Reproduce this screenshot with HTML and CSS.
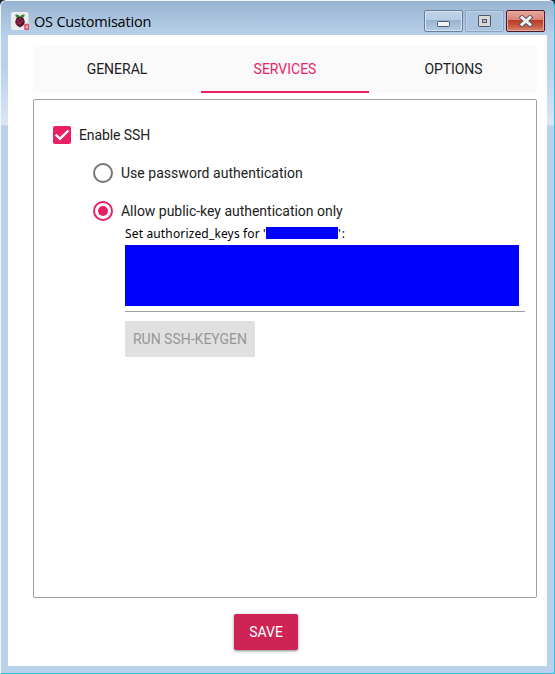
FILE: index.html
```html
<!DOCTYPE html>
<html lang="en">
<head>
<meta charset="utf-8">
<title>OS Customisation</title>
<link rel="stylesheet" href="styles.css">
</head>
<body>
<div class="window">
  <header class="titlebar">
    <svg class="app-icon" width="18" height="18" viewBox="0 0 18 18">
      <rect width="17.5" height="18" rx="2" fill="#eeecec"/>
      <path d="M4.2 2.8Q7.5 2 9 4.4Q10.5 2 13.8 2.8Q13.4 6.4 9 6.4Q4.6 6.4 4.2 2.8Z" fill="#398447"/>
      <path d="M9 5C12 5 13.2 7 13.7 9.5C14 12 12 14.2 9 15.4C6 14.2 4 12 4.3 9.5C4.8 7 6 5 9 5Z" fill="#48152a"/>
      <g fill="#a9234d"><circle cx="9" cy="7" r="1.2"/><circle cx="6.9" cy="9" r="1.3"/><circle cx="11.1" cy="9" r="1.3"/><circle cx="9" cy="11.2" r="1.4"/><circle cx="6.3" cy="11.8" r="1"/><circle cx="9" cy="14" r=".8"/></g>
      <rect x="13.2" y="11.8" width="4.8" height="6.2" rx=".7" fill="#d75069"/>
      <path d="M16.2 16.7V13.2L14.6 15.5H17" fill="none" stroke="#f4cbd2" stroke-width=".7"/>
    </svg>
    <h1 class="title">OS Customisation</h1>
    <div class="controls">
      <button class="control" aria-label="Minimise"><svg width="13" height="6"><rect x=".5" y=".5" width="12" height="5" rx=".7" fill="#f3f3f3" stroke="#535666"/></svg></button>
      <button class="control control-max" aria-label="Maximise"><svg width="13" height="12"><rect x=".5" y=".5" width="12" height="11" rx=".7" fill="#d8d8d8" stroke="#535666"/><rect x="4.5" y="4.5" width="4" height="3" fill="#a5c1df" stroke="#535666"/></svg></button>
      <button class="control control-close" aria-label="Close"><svg width="14" height="12" viewBox="0 0 14 12"><path d="M3 2.5L11 9.5M11 2.5L3 9.5" stroke="#535666" stroke-width="4.8" stroke-linecap="square"/><path d="M3 2.5L11 9.5M11 2.5L3 9.5" stroke="#f4f4f4" stroke-width="2.9" stroke-linecap="square"/></svg></button>
    </div>
  </header>
  <main class="content">
    <nav class="tabs">
      <div class="tab"><span>GENERAL</span></div>
      <div class="tab active"><span>SERVICES</span></div>
      <div class="tab tab-options"><span>OPTIONS</span></div>
    </nav>
    <section class="panel">
      <div class="option">
        <svg width="18" height="18"><rect width="18" height="18" rx="2" fill="#e91e63"/><path d="M2.7 8.6L7 12.9L15.4 4.5" fill="none" stroke="#fff" stroke-width="2.4"/></svg>
        <span class="label-ssh">Enable SSH</span>
      </div>
      <div class="option nested">
        <svg width="20" height="20"><circle cx="10" cy="10" r="9" fill="none" stroke="#757575" stroke-width="2"/></svg>
        <span class="label-password">Use password authentication</span>
      </div>
      <div class="option nested">
        <svg width="20" height="20"><circle cx="10" cy="10" r="9" fill="none" stroke="#e91e63" stroke-width="2"/><circle cx="10" cy="10" r="5" fill="#e91e63"/></svg>
        <span class="label-key">Allow public-key authentication only</span>
      </div>
      <div class="keys">
        <div class="keys-label"><span>Set authorized_keys for '</span><span class="user-mask"></span><span class="label-end">':</span></div>
        <div class="key-field"><div class="key-mask"></div></div>
        <button class="keygen" disabled><span>RUN SSH-KEYGEN</span></button>
      </div>
    </section>
    <button class="save"><span>SAVE</span></button>
  </main>
</div>
</body>
</html>
```

FILE: styles.css
```css
* { box-sizing: border-box; }
body { margin: 0; background: #172b38; }
button { font: inherit; padding: 0; border: 0; }
svg { display: block; flex: none; }

.window {
  width: 555px;
  height: 674px;
  padding: 0 7px 7px;
  border: 1px solid #2cc3dc;
  border-top-color: #eef5fb;
  border-left-color: #f0f6fb;
  border-radius: 6px 6px 0 0;
  background:
    linear-gradient(#99b4d1 0, #b9d1ea 35px, #b9d1ea 64px, #d9e6f4 124px, #b9d1ea 125px);
}
.titlebar {
  height: 34px;
  display: flex;
  align-items: flex-start;
  padding: 11px 2px 0 3px;
}
.title {
  margin: 0 0 0 5px;
  font: 400 14.5px/20px "Open Sans", "Noto Sans", sans-serif;
  letter-spacing: -.2px;
  color: #000;
  white-space: nowrap;
}
.controls { display: flex; gap: 2px; margin: -2px 0 0 auto; }
.control {
  width: 39px;
  height: 22px;
  display: flex;
  align-items: center;
  justify-content: center;
  border: 1px solid #6a7e99;
  border-radius: 2px;
  box-shadow: inset 0 0 0 1px #d6e3f0;
  background: linear-gradient(#c0d3e7 0, #b6cce3 45%, #98b4d1 46%, #b3cce5 100%);
}
.control:first-child { padding-top: 6px; }
.control-max {
  border-color: #8da4c0;
  box-shadow: inset 0 0 0 1px #bfd2e7;
  background: #aac4df;
}
.control-close {
  border-color: #501827;
  box-shadow: inset 0 0 0 1px #e5aaa2;
  background: linear-gradient(#e7a79d 0, #d98477 45%, #b63b25 46%, #c85b43 75%, #d88a70 100%);
}

.content {
  height: 631px;
  padding: 10px 10px 0 25px;
  background: #fff;
  font: 14px/20px Roboto, sans-serif;
  color: #212121;
}
.tabs { display: grid; grid-template-columns: repeat(3, 168px); height: 48px; background: #fafafa; }
.tab {
  display: flex;
  align-items: center;
  justify-content: center;
  border-bottom: 2px solid transparent;
  padding-top: 2px;
}
.tab-options { padding-left: 1px; letter-spacing: -.1px; }
.active { color: #e91e63; border-color: #e91e63; }
.panel {
  height: 499px;
  margin-top: 6px;
  padding: 26px 11px 0 19px;
  border: 1px solid #9e9e9e;
  border-radius: 2px;
}
.option { display: flex; align-items: center; gap: 8px; height: 18px; white-space: nowrap; }
.label-ssh { letter-spacing: -.1px; }
.label-password { letter-spacing: .03px; }
.label-key { letter-spacing: -.02px; }
.nested { height: 20px; margin: 19px 0 0 40px; }
.nested + .nested { margin-top: 18px; }
.keys { margin: 4px 0 0 72px; }
.keys-label {
  display: flex;
  align-items: center;
  height: 18px;
  font: 12px/18px "Noto Sans", "Open Sans", sans-serif;
  letter-spacing: .15px;
  color: #000;
  white-space: pre;
}
.label-end { letter-spacing: 1px; }
.user-mask { width: 72px; height: 12px; margin-bottom: 2px; background: #00f; }
.key-field { height: 69px; padding-top: 2px; border-bottom: 1px solid #9e9e9e; }
.key-mask { width: 394px; height: 61px; background: #00f; }
.keygen {
  display: block;
  width: 130px;
  height: 36px;
  margin-top: 9px;
  border-radius: 2px;
  background: #e0e0e0;
  color: #979797;
  white-space: nowrap;
}
.save {
  display: block;
  width: 64px;
  height: 36px;
  margin: 16px 0 0 201px;
  border-radius: 2px;
  background: #cd2355;
  color: #fff;
  box-shadow: 0 1px 3px #0007;
}
```
